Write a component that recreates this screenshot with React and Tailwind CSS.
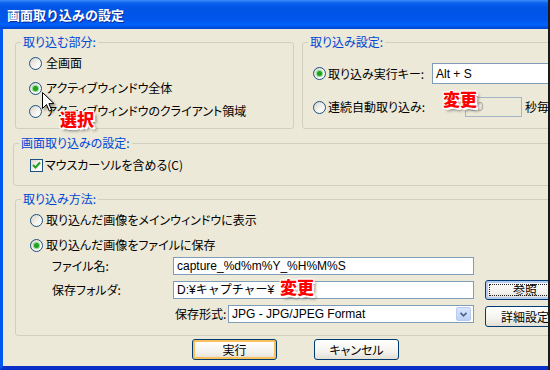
import React from "react";

const Radio = ({ checked }) => (
  <span className="w-[13px] h-[13px] shrink-0 rounded-full border border-[#1C5180] bg-[linear-gradient(135deg,#D6D2C6,#F4F3EE_55%,#FFFFFF)] flex items-center justify-center">
    {checked && (
      <span className="w-[5px] h-[5px] rounded-full bg-[#21A121] shadow-[0_0_0_1px_#8ADB8A]" />
    )}
  </span>
);

const Check = () => (
  <span className="w-[13px] h-[13px] shrink-0 border border-[#1C5180] bg-[linear-gradient(135deg,#DCD8CC,#F6F5F0_55%,#FFFFFF)] flex items-center justify-center">
    <svg width="9" height="9" viewBox="0 0 9 9">
      <path d="M1 4 L3.5 6.5 L8 1.5" fill="none" stroke="#21A121" strokeWidth="2" />
    </svg>
  </span>
);

const Group = ({ label, className, children }) => (
  <fieldset className={`border border-[#D0D0BF] rounded-[3px] min-w-0 shrink-0 ${className}`}>
    <legend className="ml-[5px] px-[2px] text-[#0046D5] leading-[14px] whitespace-nowrap">{label}</legend>
    {children}
  </fieldset>
);

const XpButton = ({ children, className = "", kind }) => (
  <div
    className={`rounded-[3px] border border-[#003C74] bg-[linear-gradient(to_bottom,#FFFFFF,#F4F3EE_60%,#E3DFD4)] flex items-center justify-center shrink-0 whitespace-nowrap ${
      kind === "default"
        ? "shadow-[inset_0_0_0_2px_#F9C15C]"
        : kind === "focus"
        ? "shadow-[inset_0_0_0_2px_#B5CCF2]"
        : ""
    } ${className}`}
  >
    {kind === "focus" ? (
      <span className="m-[3px] self-stretch flex-1 border border-dotted border-[#222] flex items-center justify-center leading-[12px]">
        {children}
      </span>
    ) : (
      <span className="leading-[14px]">{children}</span>
    )}
  </div>
);

const Note = ({ children, className }) => (
  <span
    className={`absolute text-[17px] leading-[17px] font-black text-[#FF0000] whitespace-nowrap [text-shadow:1px_0_0_#fff,-1px_0_0_#fff,0_1px_0_#fff,0_-1px_0_#fff,1px_1px_0_#fff,-1px_-1px_0_#fff,1px_-1px_0_#fff,-1px_1px_0_#fff,2px_2px_0_#fff,3px_3px_3px_#777] ${className}`}
  >
    {children}
  </span>
);

const latin = "font-['Liberation_Sans','Noto_Sans_CJK_JP',sans-serif] [font-feature-settings:normal] whitespace-nowrap";

export default function App() {
  return (
    <div className="w-[550px] h-[370px] overflow-hidden flex flex-col border-r-2 border-r-[#1A1A1A] text-[12px] text-black font-['Noto_Sans_CJK_JP',sans-serif] [font-feature-settings:'palt']">
      <div className="h-[29px] shrink-0 flex items-center pl-[7px] bg-[linear-gradient(to_bottom,#3C8CF8_0px,#0D62EE_3px,#0055E6_7px,#0056EC_20px,#0062FC_25px,#0048D6_28px)]">
        <span className="text-white font-bold text-[13px] leading-[16px] [text-shadow:1px_1px_0_#0A2A9A] [font-feature-settings:normal]">
          画面取り込みの設定
        </span>
      </div>

      <div className="relative flex-1 min-h-0 flex flex-col pt-[6px] bg-[#ECE9D8] border-l-[3px] border-l-[#0058EE] border-b-4 border-b-[#0A2FC8] overflow-hidden">
        <div className="flex gap-[8px] pl-[12px]">
          <Group label="取り込む部分:" className="w-[279px] h-[94px]">
            <div className="flex flex-col pl-[13px] whitespace-nowrap">
              <div className="mt-[7px] h-[14px] flex items-center">
                <Radio />
                <span className="ml-[4px] leading-[14px]">全画面</span>
              </div>
              <div className="mt-[11px] h-[14px] flex items-center">
                <Radio checked />
                <span className="ml-[4px] leading-[14px]">アクティブウィンドウ全体</span>
              </div>
              <div className="mt-[9px] h-[14px] flex items-center">
                <Radio />
                <span className="ml-[4px] leading-[14px]">アクティブウィンドウのクライアント領域</span>
              </div>
            </div>
          </Group>
          <Group label="取り込み設定:" className="w-[270px] h-[94px]">
            <div className="flex flex-col pl-[10px] whitespace-nowrap">
              <div className="mt-[14px] h-[21px] flex items-center">
                <Radio checked />
                <span className="ml-[2px] w-[104px] leading-[14px]">取り込み実行キー:</span>
                <div className={`flex-1 h-[21px] border border-[#7F9DB9] bg-white flex items-center pl-[3px] text-[12px] ${latin}`}>
                  Alt + S
                </div>
              </div>
              <div className="mt-[13px] h-[20px] flex items-center">
                <Radio />
                <span className="ml-[2px] w-[137px] leading-[14px]">連続自動取り込み:</span>
                <div className={`w-[57px] h-[20px] shrink-0 border border-[#A5B5C8] bg-[#ECE9D8] flex items-center pl-[4px] text-[12px] text-[#ACA899] ${latin}`}>
                  30
                </div>
                <span className="ml-[3px] leading-[14px]">秒毎</span>
              </div>
            </div>
          </Group>
        </div>

        <Group label="画面取り込みの設定:" className="ml-[10px] mt-[7px] w-[570px] h-[50px]">
          <div className="mt-[8px] h-[14px] pl-[16px] flex items-center whitespace-nowrap">
            <Check />
            <span className="ml-[2px] leading-[14px]">マウスカーソルを含める(C)</span>
          </div>
        </Group>

        <Group label="取り込み方法:" className="ml-[12px] mt-[6px] w-[570px] h-[144px]">
          <div className="flex flex-col whitespace-nowrap">
            <div className="mt-[7px] h-[14px] pl-[14px] flex items-center">
              <Radio />
              <span className="ml-[3px] leading-[14px]">取り込んだ画像をメインウィンドウに表示</span>
            </div>
            <div className="mt-[11px] h-[14px] pl-[14px] flex items-center">
              <Radio checked />
              <span className="ml-[3px] leading-[14px]">取り込んだ画像をファイルに保存</span>
            </div>
            <div className="mt-[5px] h-[18px] pl-[36px] flex items-center">
              <span className="w-[121px] leading-[14px]">ファイル名:</span>
              <div className={`w-[301px] h-[18px] border border-[#7F9DB9] bg-white flex items-center pl-[3px] text-[12px] ${latin}`}>
                capture_%d%m%Y_%H%M%S
              </div>
            </div>
            <div className="mt-[5px] h-[20px] pl-[36px] flex items-center">
              <span className="w-[121px] leading-[14px]">保存フォルダ:</span>
              <div className={`w-[301px] h-[18px] border border-[#7F9DB9] bg-white flex items-center pl-[3px] text-[12px] ${latin}`}>
                D:¥キャプチャー¥
              </div>
              <XpButton kind="focus" className="ml-[11px] w-[80px] h-[20px]">
                参照
              </XpButton>
            </div>
            <div className="mt-[5px] h-[22px] pl-[159px] flex items-start">
              <span className="w-[53px] h-[18px] flex items-center leading-[14px]">保存形式:</span>
              <div className="w-[246px] h-[18px] border border-[#7F9DB9] bg-white flex items-center pl-[3px] pr-[2px]">
                <span className={`flex-1 text-[12px] leading-[14px] ${latin}`}>JPG - JPG/JPEG Format</span>
                <span className="w-[15px] h-[14px] rounded-[2px] border border-[#B7CBF5] bg-[linear-gradient(to_bottom,#D9E5FD,#BCD0F8)] flex items-center justify-center">
                  <svg width="7" height="5" viewBox="0 0 7 5">
                    <path d="M0.5 0.8 L3.5 3.8 L6.5 0.8" fill="none" stroke="#4D6185" strokeWidth="1.6" />
                  </svg>
                </span>
              </div>
              <XpButton className="ml-[11px] mt-[1px] w-[80px] h-[21px]">詳細設定</XpButton>
            </div>
          </div>
        </Group>

        <div className="mt-[3px] h-[21px] pl-[189px] flex gap-[37px]">
          <XpButton kind="default" className="w-[85px] h-[21px]">
            実行
          </XpButton>
          <XpButton className="w-[85px] h-[21px]">キャンセル</XpButton>
        </div>

        <Note className="left-[57px] top-[81px]">選択</Note>
        <Note className="left-[440px] top-[61px]">変更</Note>
        <Note className="left-[277px] top-[249px]">変更</Note>

        <svg
          className="absolute left-[39px] top-[63px] drop-shadow-[2px_2px_1px_rgba(0,0,0,0.35)]"
          width="13"
          height="21"
          viewBox="0 0 13 21"
        >
          <path
            d="M0.5 0.5 L0.5 16.5 L4.5 12.5 L7.3 19 L9.6 18 L6.9 11.6 L12 11.6 Z"
            fill="#fff"
            stroke="#000"
            strokeWidth="1"
            strokeLinejoin="miter"
          />
        </svg>
      </div>
    </div>
  );
}
